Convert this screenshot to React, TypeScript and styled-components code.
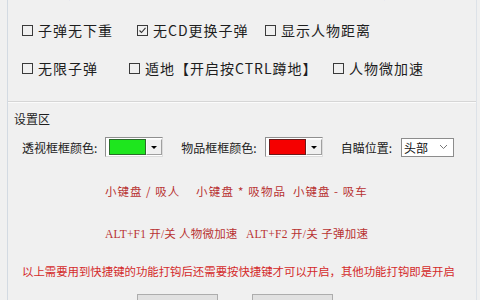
import React from "react";
import styled, { createGlobalStyle } from "styled-components";

const GlobalStyle = createGlobalStyle`
  html, body { margin: 0; padding: 0; background: #f0f0f0; }
  body { font-family: "Noto Sans CJK SC", "Noto Sans", sans-serif; }
`;

const Screen = styled.div`
  width: 480px;
  height: 300px;
  overflow: hidden;
  background: #f0f0f0;
`;

const Frame = styled.div`
  display: flex;
  flex-direction: column;
  margin-left: 7px;
  width: 468px;
  height: 100%;
  border-left: 1px solid #d3dae2;
  border-right: 1px solid #dde2e8;
`;

const TopGroup = styled.div`
  display: flex;
  flex-direction: column;
  margin-top: -27px;
  padding-bottom: 14px;
  border-bottom: 1px solid #d6d6d6;
  box-shadow: 0 1px 0 #fbfbfb;
`;

const CheckRow = styled.div`
  display: flex;
  align-items: center;
  height: 38px;
  padding-left: 14px;
`;

const Check = styled.label<{ $w?: number }>`
  display: inline-flex;
  align-items: center;
  flex: none;
  width: ${(p) => (p.$w ? `${p.$w}px` : "auto")};
`;

const Box = styled.span`
  display: flex;
  align-items: center;
  justify-content: center;
  width: 11px;
  height: 11px;
  box-sizing: border-box;
  border: 1px solid #3a3a3a;
  margin-right: 5px;
  flex: none;
`;

const CheckText = styled.span`
  font-size: 14px;
  letter-spacing: 1px;
  line-height: 1;
  color: #1e1e1e;
  white-space: nowrap;
`;

const SettingsGroup = styled.div`
  display: flex;
  flex-direction: column;
  padding-top: 10px;
`;

const GroupLabel = styled.div`
  font-size: 12px;
  line-height: 14px;
  padding-left: 6px;
  color: #1e1e1e;
`;

const FieldRow = styled.div`
  display: flex;
  align-items: center;
  margin-top: 11px;
  padding-left: 14px;
  height: 20px;
`;

const FieldLabel = styled.span<{ $gap: number }>`
  font-size: 12px;
  color: #222;
  white-space: nowrap;
  margin-right: ${(p) => p.$gap}px;
`;

const ColorCombo = styled.div`
  display: flex;
  width: 58px;
  height: 20px;
  box-sizing: border-box;
  background: #fff;
  border: 1px solid;
  border-color: #8f8f8f #dcdcdc #dcdcdc #8f8f8f;
  padding: 1px 0 1px 3px;
  margin-right: 18px;
  flex: none;
`;

const Swatch = styled.span<{ $color: string; $edge: string }>`
  width: 37px;
  box-sizing: border-box;
  background: ${(p) => p.$color};
  border: 1px solid ${(p) => p.$edge};
`;

const DropBtn = styled.span`
  display: flex;
  align-items: center;
  justify-content: center;
  width: 16px;
  box-sizing: border-box;
  background: #f0f0f0;
  border: 1px solid;
  border-color: #fafafa #a0a0a0 #a0a0a0 #fafafa;
  &::after {
    content: "";
    border-top: 3px solid #000;
    border-left: 3px solid transparent;
    border-right: 3px solid transparent;
  }
`;

const Select = styled.div`
  display: flex;
  align-items: center;
  justify-content: space-between;
  width: 53px;
  height: 19px;
  box-sizing: border-box;
  background: #fff;
  border: 1px solid #8c8c8c;
  padding: 0 5px 0 2px;
  font-size: 12px;
  color: #111;
  flex: none;
`;

const HotkeyLine = styled.div<{ $mt: number; $serif?: boolean }>`
  display: flex;
  padding-left: 97px;
  margin-top: ${(p) => p.$mt}px;
  font-family: ${(p) =>
    p.$serif
      ? `"Liberation Serif", "Noto Sans CJK SC", serif`
      : `"Noto Sans CJK SC", sans-serif`};
  font-size: 11.5px;
  line-height: 16px;
  color: #b83232;
  white-space: nowrap;
`;

const Hotkey = styled.span<{ $w?: number; $ls?: number }>`
  flex: none;
  width: ${(p) => (p.$w ? `${p.$w}px` : "auto")};
  letter-spacing: ${(p) => p.$ls ?? 0}px;
`;

const Note = styled.div`
  padding-left: 14px;
  margin-top: 21px;
  font-size: 11.4px;
  line-height: 16px;
  color: #d42a2a;
  white-space: nowrap;
`;

const ButtonRow = styled.div`
  display: flex;
  gap: 34px;
  padding-left: 129px;
  margin-top: 15px;
`;

const Button = styled.button`
  width: 81px;
  height: 24px;
  background: #e1e1e1;
  border: 1px solid #adadad;
  font-family: "Noto Sans CJK SC", sans-serif;
  font-size: 12px;
  color: #111;
  padding: 0;
`;

const Tick = () => (
  <svg width="9" height="9" viewBox="0 0 9 9">
    <path d="M1.5 4.5 L3.5 6.5 L7.5 1.8" fill="none" stroke="#333" strokeWidth="1.1" />
  </svg>
);

const Item: React.FC<{ w?: number; checked?: boolean; children: React.ReactNode }> = ({
  w,
  checked,
  children,
}) => (
  <Check $w={w}>
    <Box>{checked ? <Tick /> : null}</Box>
    <CheckText>{children}</CheckText>
  </Check>
);

const Chevron = () => (
  <svg width="9" height="6" viewBox="0 0 9 6">
    <path d="M1 1 L4.5 4.5 L8 1" fill="none" stroke="#777" strokeWidth="1" />
  </svg>
);

export default function App() {
  return (
    <>
      <GlobalStyle />
      <Screen>
        <Frame>
          <TopGroup>
            <CheckRow>
              <Item w={115}>人物透视</Item>
              <Item w={100}>血量</Item>
              <Item w={100}>名字显示</Item>
              <Item>物品透视显示</Item>
            </CheckRow>
            <CheckRow>
              <Item w={115}>子弹无下重</Item>
              <Item w={128} checked>
                无CD更换子弹
              </Item>
              <Item>显示人物距离</Item>
            </CheckRow>
            <CheckRow>
              <Item w={107}>无限子弹</Item>
              <Item w={204}>遁地【开启按CTRL蹲地】</Item>
              <Item>人物微加速</Item>
            </CheckRow>
          </TopGroup>
          <SettingsGroup>
            <GroupLabel>设置区</GroupLabel>
            <FieldRow>
              <FieldLabel $gap={8}>透视框框颜色:</FieldLabel>
              <ColorCombo>
                <Swatch $color="#1ee61e" $edge="#2a6a2a" />
                <DropBtn />
              </ColorCombo>
              <FieldLabel $gap={8}>物品框框颜色:</FieldLabel>
              <ColorCombo>
                <Swatch $color="#f50000" $edge="#6a1a1a" />
                <DropBtn />
              </ColorCombo>
              <FieldLabel $gap={9}>自瞄位置:</FieldLabel>
              <Select>
                <span>头部</span>
                <Chevron />
              </Select>
            </FieldRow>
            <HotkeyLine $mt={26}>
              <Hotkey $w={91} $ls={1}>小键盘 / 吸人</Hotkey>
              <Hotkey $w={97} $ls={1.2}>小键盘 * 吸物品</Hotkey>
              <Hotkey $ls={1}>小键盘 - 吸车</Hotkey>
            </HotkeyLine>
            <HotkeyLine $mt={27} $serif>
              <Hotkey $w={141} $ls={0.2}>ALT+F1 开/关 人物微加速</Hotkey>
              <Hotkey $ls={0.3}>ALT+F2 开/关 子弹加速</Hotkey>
            </HotkeyLine>
            <Note>以上需要用到快捷键的功能打钩后还需要按快捷键才可以开启，其他功能打钩即是开启</Note>
            <ButtonRow>
              <Button>开启</Button>
              <Button>关闭</Button>
            </ButtonRow>
          </SettingsGroup>
        </Frame>
      </Screen>
    </>
  );
}
